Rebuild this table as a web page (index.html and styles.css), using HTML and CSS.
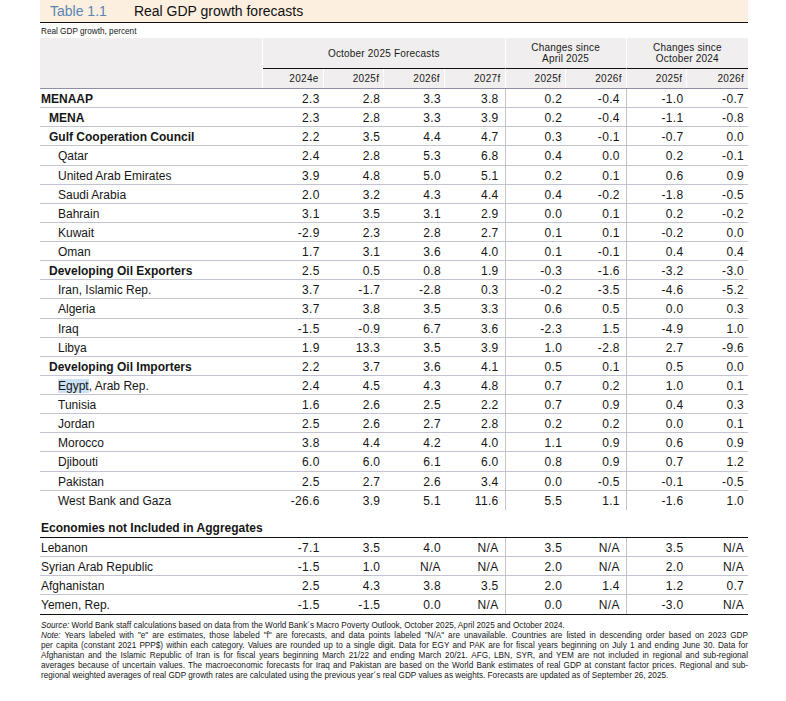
FILE: index.html
```html
<!DOCTYPE html>
<html lang="en">
<head>
<meta charset="utf-8">
<title>Table 1.1 Real GDP growth forecasts</title>
<link rel="stylesheet" href="styles.css">
</head>
<body>
<div class="page">
  <div class="title-bar">
    <span class="tnum">Table 1.1</span>
    <span class="ttl">Real GDP growth forecasts</span>
  </div>
  <div class="subtitle">Real GDP growth, percent</div>

  <div class="thead">
    <div class="corner"></div>
    <div class="group g4">October 2025 Forecasts</div>
    <div class="group g2">Changes since<br>April 2025</div>
    <div class="group g2 last">Changes since<br>October 2024</div>
    <div class="yr">2024e</div>
    <div class="yr">2025f</div>
    <div class="yr">2026f</div>
    <div class="yr">2027f</div>
    <div class="yr">2025f</div>
    <div class="yr">2026f</div>
    <div class="yr">2025f</div>
    <div class="yr last">2026f</div>
  </div>

  <div class="tbody">
    <div class="row b"><div class="lbl l0">MENAAP</div><div>2.3</div><div>2.8</div><div>3.3</div><div class="sep">3.8</div><div>0.2</div><div class="sep">-0.4</div><div>-1.0</div><div>-0.7</div></div>
    <div class="row b"><div class="lbl l1">MENA</div><div>2.3</div><div>2.8</div><div>3.3</div><div class="sep">3.9</div><div>0.2</div><div class="sep">-0.4</div><div>-1.1</div><div>-0.8</div></div>
    <div class="row b"><div class="lbl l1">Gulf Cooperation Council</div><div>2.2</div><div>3.5</div><div>4.4</div><div class="sep">4.7</div><div>0.3</div><div class="sep">-0.1</div><div>-0.7</div><div>0.0</div></div>
    <div class="row"><div class="lbl l2">Qatar</div><div>2.4</div><div>2.8</div><div>5.3</div><div class="sep">6.8</div><div>0.4</div><div class="sep">0.0</div><div>0.2</div><div>-0.1</div></div>
    <div class="row"><div class="lbl l2">United Arab Emirates</div><div>3.9</div><div>4.8</div><div>5.0</div><div class="sep">5.1</div><div>0.2</div><div class="sep">0.1</div><div>0.6</div><div>0.9</div></div>
    <div class="row"><div class="lbl l2">Saudi Arabia</div><div>2.0</div><div>3.2</div><div>4.3</div><div class="sep">4.4</div><div>0.4</div><div class="sep">-0.2</div><div>-1.8</div><div>-0.5</div></div>
    <div class="row"><div class="lbl l2">Bahrain</div><div>3.1</div><div>3.5</div><div>3.1</div><div class="sep">2.9</div><div>0.0</div><div class="sep">0.1</div><div>0.2</div><div>-0.2</div></div>
    <div class="row"><div class="lbl l2">Kuwait</div><div>-2.9</div><div>2.3</div><div>2.8</div><div class="sep">2.7</div><div>0.1</div><div class="sep">0.1</div><div>-0.2</div><div>0.0</div></div>
    <div class="row"><div class="lbl l2">Oman</div><div>1.7</div><div>3.1</div><div>3.6</div><div class="sep">4.0</div><div>0.1</div><div class="sep">-0.1</div><div>0.4</div><div>0.4</div></div>
    <div class="row b"><div class="lbl l1">Developing Oil Exporters</div><div>2.5</div><div>0.5</div><div>0.8</div><div class="sep">1.9</div><div>-0.3</div><div class="sep">-1.6</div><div>-3.2</div><div>-3.0</div></div>
    <div class="row"><div class="lbl l2">Iran, Islamic Rep.</div><div>3.7</div><div>-1.7</div><div>-2.8</div><div class="sep">0.3</div><div>-0.2</div><div class="sep">-3.5</div><div>-4.6</div><div>-5.2</div></div>
    <div class="row"><div class="lbl l2">Algeria</div><div>3.7</div><div>3.8</div><div>3.5</div><div class="sep">3.3</div><div>0.6</div><div class="sep">0.5</div><div>0.0</div><div>0.3</div></div>
    <div class="row"><div class="lbl l2">Iraq</div><div>-1.5</div><div>-0.9</div><div>6.7</div><div class="sep">3.6</div><div>-2.3</div><div class="sep">1.5</div><div>-4.9</div><div>1.0</div></div>
    <div class="row"><div class="lbl l2">Libya</div><div>1.9</div><div>13.3</div><div>3.5</div><div class="sep">3.9</div><div>1.0</div><div class="sep">-2.8</div><div>2.7</div><div>-9.6</div></div>
    <div class="row b"><div class="lbl l1">Developing Oil Importers</div><div>2.2</div><div>3.7</div><div>3.6</div><div class="sep">4.1</div><div>0.5</div><div class="sep">0.1</div><div>0.5</div><div>0.0</div></div>
    <div class="row"><div class="lbl l2"><span class="hl">Egypt</span>, Arab Rep.</div><div>2.4</div><div>4.5</div><div>4.3</div><div class="sep">4.8</div><div>0.7</div><div class="sep">0.2</div><div>1.0</div><div>0.1</div></div>
    <div class="row"><div class="lbl l2">Tunisia</div><div>1.6</div><div>2.6</div><div>2.5</div><div class="sep">2.2</div><div>0.7</div><div class="sep">0.9</div><div>0.4</div><div>0.3</div></div>
    <div class="row"><div class="lbl l2">Jordan</div><div>2.5</div><div>2.6</div><div>2.7</div><div class="sep">2.8</div><div>0.2</div><div class="sep">0.2</div><div>0.0</div><div>0.1</div></div>
    <div class="row"><div class="lbl l2">Morocco</div><div>3.8</div><div>4.4</div><div>4.2</div><div class="sep">4.0</div><div>1.1</div><div class="sep">0.9</div><div>0.6</div><div>0.9</div></div>
    <div class="row"><div class="lbl l2">Djibouti</div><div>6.0</div><div>6.0</div><div>6.1</div><div class="sep">6.0</div><div>0.8</div><div class="sep">0.9</div><div>0.7</div><div>1.2</div></div>
    <div class="row"><div class="lbl l2">Pakistan</div><div>2.5</div><div>2.7</div><div>2.6</div><div class="sep">3.4</div><div>0.0</div><div class="sep">-0.5</div><div>-0.1</div><div>-0.5</div></div>
    <div class="row end"><div class="lbl l2">West Bank and Gaza</div><div>-26.6</div><div>3.9</div><div>5.1</div><div class="sep">11.6</div><div>5.5</div><div class="sep">1.1</div><div>-1.6</div><div>1.0</div></div>
  </div>

  <div class="section-head">Economies not Included in Aggregates</div>
  <div class="tbody">
    <div class="row"><div class="lbl l0">Lebanon</div><div>-7.1</div><div>3.5</div><div>4.0</div><div class="sep">N/A</div><div>3.5</div><div class="sep">N/A</div><div>3.5</div><div>N/A</div></div>
    <div class="row"><div class="lbl l0">Syrian Arab Republic</div><div>-1.5</div><div>1.0</div><div>N/A</div><div class="sep">N/A</div><div>2.0</div><div class="sep">N/A</div><div>2.0</div><div>N/A</div></div>
    <div class="row"><div class="lbl l0">Afghanistan</div><div>2.5</div><div>4.3</div><div>3.8</div><div class="sep">3.5</div><div>2.0</div><div class="sep">1.4</div><div>1.2</div><div>0.7</div></div>
    <div class="row final"><div class="lbl l0">Yemen, Rep.</div><div>-1.5</div><div>-1.5</div><div>0.0</div><div class="sep">N/A</div><div>0.0</div><div class="sep">N/A</div><div>-3.0</div><div>N/A</div></div>
  </div>

  <div class="notes">
    <div class="nl last"><i>Source:</i> World Bank staff calculations based on data from the World Bank´s Macro Poverty Outlook, October 2025, April 2025 and October 2024.</div>
    <div class="nl"><i>Note:</i> Years labeled with "e" are estimates, those labeled "f" are forecasts, and data points labeled "N/A" are unavailable. Countries are listed in descending order based on 2023 GDP</div>
    <div class="nl">per capita (constant 2021 PPP$) within each category. Values are rounded up to a single digit. Data for EGY and PAK are for fiscal years beginning on July 1 and ending June 30. Data for</div>
    <div class="nl">Afghanistan and the Islamic Republic of Iran is for fiscal years beginning March 21/22 and ending March 20/21. AFG, LBN, SYR, and YEM are not included in regional and sub-regional</div>
    <div class="nl">averages because of uncertain values. The macroeconomic forecasts for Iraq and Pakistan are based on the World Bank estimates of real GDP at constant factor prices. Regional and sub-</div>
    <div class="nl last">regional weighted averages of real GDP growth rates are calculated using the previous year´s real GDP values as weights. Forecasts are updated as of September 26, 2025.</div>
  </div>
</div>
</body>
</html>
```

FILE: styles.css
```css
* { box-sizing: border-box; }

html, body {
  margin: 0;
  padding: 0;
  background: #ffffff;
}

body {
  font-family: "Liberation Sans", Arial, sans-serif;
  color: #161616;
}

.page {
  margin-left: 40px;
  width: 708px;
}

/* Title */
.title-bar {
  height: 23px;
  background: #fcefdf;
  border-bottom: 1px solid #111;
  font-size: 14px;
  line-height: 22px;
  white-space: nowrap;
}
.tnum {
  display: inline-block;
  margin-left: 10px;
  width: 80px;
  color: #5a86b4;
}
.ttl {
  color: #111;
}

.subtitle {
  height: 15px;
  font-size: 8.2px;
  line-height: 15px;
  padding-left: 1px;
  padding-top: 1px;
}

/* Table head */
.thead {
  display: grid;
  grid-template-columns: 223px repeat(8, 1fr);
  grid-template-rows: 31px 19px;
  background: #f0eeee;
  border-bottom: 1px solid #8e8ea8;
  font-size: 10px;
  color: #1a1a1a;
}
.corner {
  grid-row: 1 / span 2;
  border-right: 1px solid #ffffff;
}
.group {
  display: flex;
  align-items: center;
  justify-content: center;
  text-align: center;
  line-height: 11px;
  border-bottom: 1px solid #111;
  border-right: 1px solid #ffffff;
  letter-spacing: 0.2px;
}
.group.g4 { grid-column: span 4; }
.group.g2 { grid-column: span 2; }
.group.last, .yr.last { border-right: none; }
.yr {
  text-align: right;
  padding-right: 4px;
  line-height: 19px;
  border-right: 1px solid #ffffff;
  letter-spacing: 0.3px;
}

/* Table body */
.row {
  display: grid;
  grid-template-columns: 223px repeat(8, 1fr);
  height: 19.14px;
  border-bottom: 1px solid #c3c3d3;
  font-size: 12px;
  line-height: 18px;
}
.row > div {
  text-align: right;
  padding-right: 4px;
  padding-top: 1px;
  white-space: nowrap;
  letter-spacing: 0.3px;
}
.row > .lbl {
  text-align: left;
  padding-right: 0;
  letter-spacing: 0;
}
.row > .sep {
  border-right: 1px solid #c4c4c4;
  padding-right: 6px;
}
.row.b > .lbl { font-weight: bold; }
.lbl.l0 { padding-left: 1px; }
.lbl.l1 { padding-left: 9px; }
.lbl.l2 { padding-left: 18px; }
.row.end { border-bottom: none; }
.row.final { border-bottom: 1px solid #111; height: 19.5px; }

.hl { background: #cce1f5; }

.section-head {
  height: 28px;
  padding-top: 10px;
  padding-left: 1px;
  font-size: 12px;
  font-weight: bold;
  line-height: 16px;
  border-bottom: 1px solid #111;
}

/* Notes */
.notes {
  margin-top: 6px;
  padding-left: 1px;
  font-size: 8.2px;
  line-height: 10px;
}
.nl {
  text-align: justify;
  text-align-last: justify;
  white-space: nowrap;
}
.nl.last {
  text-align-last: left;
}
```
